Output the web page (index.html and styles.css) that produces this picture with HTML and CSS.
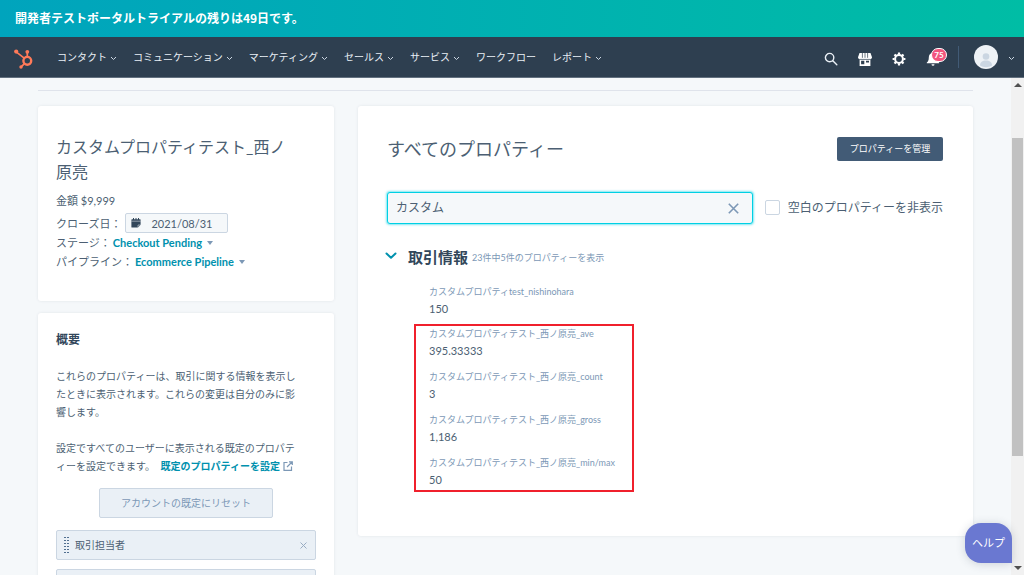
FILE: index.html
```html
<!DOCTYPE html>
<html lang="ja">
<head>
<meta charset="utf-8">
<meta name="viewport" content="width=device-width, initial-scale=1">
<title>カスタムプロパティテスト</title>
<link rel="stylesheet" href="styles.css">
</head>
<body>
<div class="banner">開発者テストポータルトライアルの残りは49日です。</div>
<header class="topbar">
  <a class="logo" href="#" aria-label="ホーム">
    <svg width="20" height="20" viewBox="0 0 20 20" fill="none" stroke="#ff7a59">
      <circle cx="13.3" cy="11.8" r="3.9" stroke-width="2.4"/>
      <path d="M13.3 7.6V3M10.2 9.2 2.5 3.2M10.4 14.7l-3 3" stroke-width="1.700"/>
      <g fill="#ff7a59" stroke="none"><circle cx="13.3" cy="2.8" r="1.9"/><circle cx="2.2" cy="2.6" r="2.100"/><circle cx="7" cy="18" r="1.700"/></g>
    </svg>
  </a>
  <nav class="menu">
    <a href="#">コンタクト<svg class="chev" viewBox="0 0 7 5"><path d="M1 1l2.5 2.5L6 1"/></svg></a>
    <a href="#">コミュニケーション<svg class="chev" viewBox="0 0 7 5"><path d="M1 1l2.5 2.5L6 1"/></svg></a>
    <a href="#">マーケティング<svg class="chev" viewBox="0 0 7 5"><path d="M1 1l2.5 2.5L6 1"/></svg></a>
    <a href="#">セールス<svg class="chev" viewBox="0 0 7 5"><path d="M1 1l2.5 2.5L6 1"/></svg></a>
    <a href="#">サービス<svg class="chev" viewBox="0 0 7 5"><path d="M1 1l2.5 2.5L6 1"/></svg></a>
    <a href="#">ワークフロー</a>
    <a href="#">レポート<svg class="chev" viewBox="0 0 7 5"><path d="M1 1l2.5 2.5L6 1"/></svg></a>
  </nav>
  <div class="tools">
    <button class="tool" aria-label="検索"><svg width="14" height="14" viewBox="0 0 14 14" fill="none" stroke="#eaf0f6" stroke-width="1.4" stroke-linecap="round"><circle cx="5.6" cy="5.6" r="4.2"/><path d="M8.8 8.8l4 4"/></svg></button>
    <button class="tool" aria-label="マーケットプレイス"><svg width="14" height="14" viewBox="0 0 14 14"><path fill="#fff" d="M1.5 1h11L14 5.2c0 1.2-.8 1.8-1.6 1.8V14H1.6V7C.8 7 0 6.4 0 5.2zM3.1 8.8v3.5h3.2V8.8zM8 8.8v1.8h3V8.8z" fill-rule="evenodd"/><path d="M4.4 1v4.8M7 1v4.8M9.6 1v4.8M1.6 7.4h10.8" stroke="#2e3f50" stroke-width=".7"/></svg></button>
    <button class="tool" aria-label="設定"><svg width="14" height="14" viewBox="0 0 14 14" fill="none" stroke="#fff"><circle cx="7" cy="7" r="3.9" stroke-width="2"/><path d="M7 .6v2M7 11.4v2M.6 7h2M11.4 7h2M2.5 2.5l1.4 1.4M10.1 10.1l1.4 1.4M2.5 11.5l1.4-1.4M10.1 3.9l1.4-1.4" stroke-width="2.2"/></svg></button>
    <button class="tool bell" aria-label="通知"><svg width="14" height="14" viewBox="0 0 14 14" fill="#fff"><path d="M7 1c2.8 0 4.2 2 4.2 4.4 0 2.8.6 3.8 2 5.1v.8H.8v-.8c1.4-1.3 2-2.3 2-5.1C2.800 3 4.200 1 7 1zM5.500 12.200h3a1.500 1.500 0 0 1-3 0z"/></svg><span class="badge">75</span></button>
    <span class="divider"></span>
    <button class="account" aria-label="アカウント">
      <svg width="24" height="24" viewBox="0 0 24 24"><circle cx="12" cy="12" r="12" fill="#eef2f6"/><circle cx="12" cy="11.500" r="3.300" fill="#cbd6e2"/><path d="M6 20.500c0-3.400 2.400-5 6-5s6 1.600 6 5c-3.600 2.200-8.400 2.200-12 0z" fill="#cbd6e2"/></svg>
      <svg class="chev" viewBox="0 0 7 5"><path d="M1 1l2.500 2.500L6 1"/></svg>
    </button>
  </div>
</header>
<div class="viewport">
  <main class="page">
    <hr class="rule">
    <div class="columns">
      <div class="side">
        <section class="card deal">
          <h1>カスタムプロパティテスト_西ノ原亮</h1>
          <div class="facts">
            <div class="amount">金額 $9,999</div>
            <div class="fact"><label for="close">クローズ日：</label>
              <span class="date"><svg width="10" height="10" viewBox="0 0 10 10"><path d="M1 1.200h8q.6 0 .6.600V6.800L7 9.600H1q-.6 0-.6-.6V1.800q0-.6.6-.6z" fill="#33475b"/><path d="M2.500 0v2M5 0v2M7.500 0v2" stroke="#33475b" stroke-width="1"/><path d="M.4 3.200h9.200M7 9.600V7h2.600" stroke="#f5f8fa" stroke-width=".5" fill="none"/></svg><input id="close" type="text" value="2021/08/31"></span></div>
            <div class="fact"><span>ステージ：</span><button class="pick">Checkout Pending</button></div>
            <div class="fact"><span>パイプライン：</span><button class="pick">Ecommerce Pipeline</button></div>
          </div>
        </section>
        <section class="card about">
          <h2>概要</h2>
          <p>これらのプロパティーは、取引に関する情報を表示したときに表示されます。これらの変更は自分のみに影響します。</p>
          <p>設定ですべてのユーザーに表示される既定のプロパティーを設定できます。 <a href="#">既定のプロパティーを設定<svg width="10" height="10" viewBox="0 0 10 10" fill="none" stroke="#7c98b6" stroke-width="1.200"><path d="M4.500 1.500H1v7.800h7.500V5.500M6 .8h3.300V4M9 1L4 6"/></svg></a></p>
          <button class="reset">アカウントの既定にリセット</button>
          <ul class="list">
            <li><span class="grip"></span>取引担当者<button aria-label="削除"><svg width="7" height="7" viewBox="0 0 7 7" stroke="#99acc2" stroke-width="1"><path d="M.5.5l6 6M6.500.5l-6 6"/></svg></button></li>
            <li></li>
          </ul>
        </section>
      </div>
      <section class="card props">
        <div class="head"><h2>すべてのプロパティー</h2><button class="manage">プロパティーを管理</button></div>
        <div class="filter">
          <div class="search"><input type="text" value="カスタム" aria-label="プロパティーを検索"><button aria-label="クリア"><svg width="11" height="11" viewBox="0 0 11 11" stroke="#7c98b6" stroke-width="1.600"><path d="M.8.8l9.400 9.400M10.200.8L.8 10.200"/></svg></button></div>
          <label class="hide"><input type="checkbox">空白のプロパティーを非表示</label>
        </div>
        <div class="group">
          <svg width="12" height="8" viewBox="0 0 12 8" fill="none" stroke="#0091ae" stroke-width="2" stroke-linecap="round" stroke-linejoin="round"><path d="M1.500 1.500L6 5.800l4.500-4.300"/></svg>
          <h3>取引情報</h3><small>23件中5件のプロパティーを表示</small>
        </div>
        <dl class="values first">
          <div><dt>カスタムプロパティtest_nishinohara</dt><dd>150</dd></div>
        </dl>
        <dl class="values marked">
          <div><dt>カスタムプロパティテスト_西ノ原亮_ave</dt><dd>395.33333</dd></div>
          <div><dt>カスタムプロパティテスト_西ノ原亮_count</dt><dd>3</dd></div>
          <div><dt>カスタムプロパティテスト_西ノ原亮_gross</dt><dd>1,186</dd></div>
          <div><dt>カスタムプロパティテスト_西ノ原亮_min/max</dt><dd>50</dd></div>
        </dl>
      </section>
    </div>
  </main>
  <div class="scroll" aria-hidden="true"><i class="up"></i><i class="thumb"></i><i class="down"></i></div>
  <button class="help">ヘルプ</button>
</div>
</body>
</html>
```
FILE: styles.css
```css
* { box-sizing: border-box; }
body {
  margin: 0;
  height: 100vh;
  display: flex;
  flex-direction: column;
  overflow: hidden;
  background: #f5f8fa;
  color: #4c5f73;
  font: 11px/18px Lato, "Noto Sans CJK JP", sans-serif;
}
h1, h2, h3, p, ul, dl, dd { margin: 0; padding: 0; }
button, input { font: inherit; color: inherit; margin: 0; padding: 0; border: 0; background: none; }
a { text-decoration: none; color: inherit; }
svg { flex: none; }

.banner {
  flex: none;
  padding: 0 15px;
  font-family: "Noto Sans CJK JP", sans-serif;
  font-size: 12px;
  line-height: 36px;
  padding-bottom: 1px;
  font-weight: 700;
  color: #fff;
  background: linear-gradient(90deg, #00a4bd, #00bda5);
}
.topbar {
  flex: none;
  height: 41px;
  display: flex;
  align-items: center;
  padding: 0 9px 0 14px;
  background: #2e3f50;
  border-bottom: 1px solid #62707f;
}
.logo { display: flex; width: 43px; padding-top: 3px; }
.menu { display: flex; gap: 16px; font-size: 10px; color: #eaf0f6; }
.menu a { display: flex; align-items: center; gap: 3px; white-space: nowrap; }
.chev { width: 7px; height: 5px; fill: none; stroke: #cbd6e2; stroke-width: 1; margin-top: 3px; }
.tools { margin-left: auto; display: flex; align-items: center; gap: 20px; }
.tool { display: flex; margin-top: 3px; }
.bell { position: relative; }
.badge {
  position: absolute;
  left: 5px;
  top: -4px;
  width: 16px;
  height: 14px;
  border: 1px solid #fff;
  border-radius: 7px;
  background: #f2547d;
  color: #fff;
  font-size: 8px;
  line-height: 12px;
  font-weight: 700;
  text-align: center;
}
.divider { width: 1px; height: 22px; margin-left: -2px; margin-right: -5px; background: #425b76; }
.account { display: flex; align-items: center; gap: 10px; }

.viewport { flex: 1; min-height: 0; display: flex; position: relative; }
.page { flex: 1; min-width: 0; padding: 12px 38px 0; overflow: hidden; }
.rule { margin: 0 0 15px; border: 0; border-top: 1px solid #dfe3eb; }
.columns { display: grid; grid-template-columns: 296fr 615fr; gap: 24px; align-items: start; }
.side { display: grid; gap: 12px; }
.card { background: #fff; border-radius: 3px; box-shadow: 0 0 3px #2d3e501a; }

.deal { padding: 28px 18px 30px; }
.deal h1 { padding-right: 16px; font-size: 16px; line-height: 25px; font-weight: 400; }
.facts { padding-top: 7px; }
.amount { line-height: 20px; padding-bottom: 2px; }
.fact { display: flex; align-items: center; gap: 2px; line-height: 19px; }
.date {
  display: flex;
  align-items: center;
  gap: 10px;
  width: 103px;
  height: 20px;
  margin-left: 2px;
  padding-left: 5px;
  border: 1px solid #cbd6e2;
  border-radius: 2px;
  background: #f5f8fa;
}
.date input { width: 72px; }
.pick { display: flex; align-items: center; gap: 5px; color: #0091ae; font-weight: 700; }
.pick::after { content: ""; border: 3px solid transparent; border-top: 4px solid #7c98b6; border-bottom: 0; }

.about { padding: 18px 18px 60px; }
.about h2 { font-size: 12px; color: #33475b; }
.about p { font-size: 10px; margin-top: 18px; padding-right: 12px; line-break: loose; }
.about p a { display: inline-flex; align-items: center; gap: 3px; line-height: 14px; margin-left: 3px; color: #0091ae; font-weight: 700; white-space: nowrap; }
.reset {
  display: block;
  margin: 13px auto 12px;
  width: 174px;
  height: 30px;
  border: 1px solid #cbd6e2;
  border-radius: 2px;
  background: #eaf0f6;
  color: #7c98b6;
  font-size: 10px;
}
.list { list-style: none; display: grid; gap: 9px; }
.list li {
  height: 30px;
  display: flex;
  align-items: center;
  padding: 0 8px 0 7px;
  border: 1px solid #cbd6e2;
  border-radius: 2px;
  background: #eaf0f6;
  font-size: 10px;
}
.grip {
  width: 5px;
  height: 17px;
  margin-right: 6px;
  background: repeating-linear-gradient(#0000 0 1px, #eaf0f6 1px 3px), linear-gradient(90deg, #516f90 2px, #0000 2px 3px, #516f90 3px);
}
.list button { margin-left: auto; display: flex; }

.props { padding: 28px 30px 44px 29px; }
.head { display: flex; justify-content: space-between; align-items: center; }
.head h2 { font-size: 18px; line-height: 30px; font-weight: 400; }
.manage { width: 106px; height: 24px; border-radius: 2px; background: #425b76; color: #fff; font-size: 9px; }
.filter { display: flex; align-items: center; gap: 12px; margin-top: 28px; font-size: 12px; }
.search {
  flex: 1;
  min-width: 0;
  height: 32px;
  display: flex;
  align-items: center;
  padding: 0 13px 0 8px;
  border: 1px solid #00d0e4;
  border-radius: 3px;
  box-shadow: 0 0 2px 1px #00d0e480;
  background: #f5f8fa;
}
.search input { flex: 1; min-width: 0; outline: 0; }
.search button { display: flex; }
.hide { display: flex; align-items: center; gap: 8px; white-space: nowrap; }
.hide input { appearance: none; width: 15px; height: 15px; margin-bottom: 2px; border: 1px solid #cbd6e2; border-radius: 2px; background: #fff; }
.group { display: flex; align-items: center; margin-top: 22px; color: #33475b; }
.group svg { margin: 0 11px 2px -2px; }
.group h3 { font-size: 15px; line-height: 20px; }
.group small { margin-left: 4px; padding-top: 3px; font-size: 9px; color: #7c98b6; }
.values { display: grid; gap: 9px; }
.values dt { font-size: 9px; line-height: 14px; color: #7c98b6; white-space: nowrap; }
.values dd { line-height: 20px; }
.first { margin: 18px 0 5px 42px; }
.marked { width: max-content; margin-left: 27px; padding: 1px 17px 0 13px; border: 2px solid #f0202c; }

.scroll { flex: none; width: 13px; display: flex; flex-direction: column; align-items: center; background: #f1f1f1; }
.up, .down { margin: 5px 0; border: 4px solid transparent; }
.up { border-top: 0; border-bottom-color: #505050; }
.down { border-bottom: 0; border-top-color: #505050; }
.thumb { width: 11px; height: 64%; margin-top: 46px; margin-bottom: auto; background: #c1c1c1; }
.help {
  position: absolute;
  right: 12px;
  bottom: 12px;
  width: 47px;
  height: 40px;
  border-radius: 16px 16px 0 16px;
  background: #6a78d1;
  color: #fff;
  box-shadow: 0 1px 10px #2d3e5033;
}
```
